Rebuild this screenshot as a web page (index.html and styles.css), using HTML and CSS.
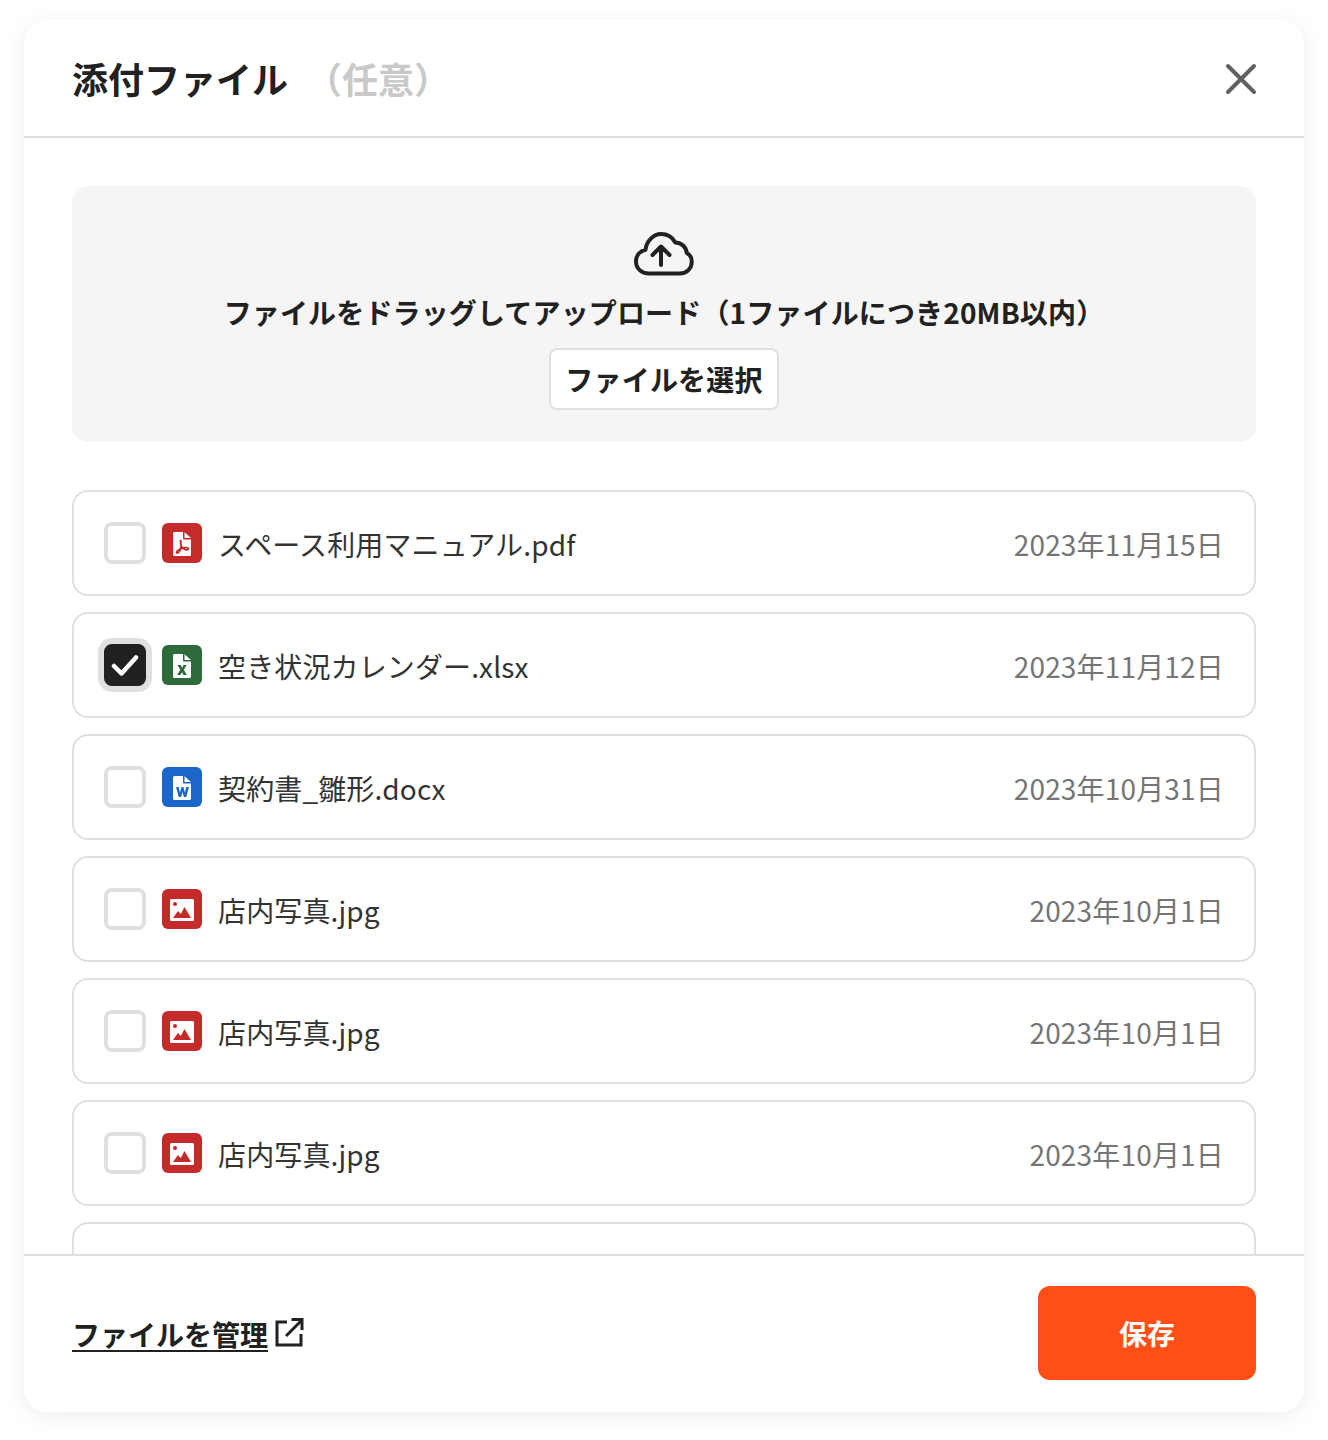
FILE: index.html
```html
<!DOCTYPE html>
<html lang="ja">
<head>
<meta charset="utf-8">
<title>添付ファイル</title>
<link rel="stylesheet" href="styles.css">
</head>
<body>
<svg class="defs" width="0" height="0" aria-hidden="true">
  <defs>
    <symbol id="doc" viewBox="0 0 40 40"><path fill="#fff" d="M12.500 9H21v6.500a1 1 0 0 0 1 1h7v15a1.500 1.500 0 0 1-1.500 1.500h-15a1.500 1.500 0 0 1-1.500-1.500v-21A1.500 1.500 0 0 1 12.500 9Z"/><path fill="#fff" d="M22.500 9.200L29 15h-6.500V9.200Z"/></symbol>
    <symbol id="pic" viewBox="0 0 40 40"><rect width="40" height="40" rx="6" fill="#c62b2b"/><rect x="8" y="10" width="24" height="22" rx="1.500" fill="#fff"/><circle cx="13" cy="15" r="2" fill="#c62b2b"/><path d="M11 29l5-7 2.800 3 3.700-7L29 29H11Z" fill="#c62b2b"/></symbol>
  </defs>
</svg>
<main class="dialog">
  <header class="head">
    <h1 class="title">添付ファイル<span class="optional">（任意）</span></h1>
    <svg class="close" viewBox="0 0 32 32"><path d="M3 3l26 26M29 3L3 29"/></svg>
  </header>
  <div class="content">
    <section class="drop">
      <svg class="cloud" viewBox="0 0 60 44"><path d="M15 41.500C7.500 41.500 2 36.500 2 29.500c0-6 4-10.500 9.500-11.800C12.500 9 19.500 2 27 2c6.500 0 11.500 3.300 14.300 8.500 6.500.3 11 4.700 11.500 10.500 3.300 1.700 5 5 5 8.500 0 7-5 12-12 12H15Z"/><path d="M27 33V16M18.500 23L27 14.500 35.500 23"/></svg>
      <p class="drop-text">ファイルをドラッグしてアップロード（1ファイルにつき20MB以内）</p>
      <button class="pick">ファイルを選択</button>
    </section>
    <ul class="files">
      <li class="file">
        <span class="check"></span>
        <svg class="ficon" viewBox="0 0 40 40"><rect width="40" height="40" rx="6" fill="#c62b2b"/><use href="#doc"/><path d="M18.800 18c-.6 3 .8 6.500 3.700 8.300 1.700 1 3.800.7 3.800-.6 0-1.400-3-1.500-5.800-.6-2.500.9-6 2.800-6 4.200 0 1.300 2.300 1 3.500-1.800 1.100-2.800 1.300-7.200.8-9.500-.1-.4-.3-.4-.4 0Z" fill="none" stroke="#c62b2b" stroke-width="1.700"/></svg>
        <span class="name">スペース利用マニュアル.pdf</span>
        <span class="date">2023年11月15日</span>
      </li>
      <li class="file">
        <span class="check on"><svg viewBox="0 0 28 24"><path d="M3 13l7.500 7.500L25 4.500"/></svg></span>
        <svg class="ficon" viewBox="0 0 40 40"><rect width="40" height="40" rx="6" fill="#2f6a3a"/><use href="#doc"/><path d="M15.500 20h3.300l1.300 2.700 1.400-2.700h3.200l-2.900 4.800 3.100 5.200h-3.400l-1.500-2.800-1.500 2.800h-3.300l3.100-5.200-2.800-4.800Z" fill="#2f6a3a"/></svg>
        <span class="name">空き状況カレンダー.xlsx</span>
        <span class="date">2023年11月12日</span>
      </li>
      <li class="file">
        <span class="check"></span>
        <svg class="ficon" viewBox="0 0 40 40"><rect width="40" height="40" rx="6" fill="#1b66c9"/><use href="#doc"/><path d="M14 20h2.700l1.300 5.700 1.500-5.700h1.900l1.500 5.700 1.300-5.700H27l-2.800 10h-2.300L20.500 24.700 19.100 30h-2.300L14 20Z" fill="#1b66c9"/></svg>
        <span class="name">契約書_雛形.docx</span>
        <span class="date">2023年10月31日</span>
      </li>
      <li class="file">
        <span class="check"></span>
        <svg class="ficon" viewBox="0 0 40 40"><use href="#pic"/></svg>
        <span class="name">店内写真.jpg</span>
        <span class="date">2023年10月1日</span>
      </li>
      <li class="file">
        <span class="check"></span>
        <svg class="ficon" viewBox="0 0 40 40"><use href="#pic"/></svg>
        <span class="name">店内写真.jpg</span>
        <span class="date">2023年10月1日</span>
      </li>
      <li class="file">
        <span class="check"></span>
        <svg class="ficon" viewBox="0 0 40 40"><use href="#pic"/></svg>
        <span class="name">店内写真.jpg</span>
        <span class="date">2023年10月1日</span>
      </li>
      <li class="file"></li>
    </ul>
  </div>
  <footer class="foot">
    <a class="manage" href="#"><span class="manage-text">ファイルを管理</span><svg viewBox="0 0 30 30"><path d="M13 5H3v23h24V17M12 19L27 4M17.500 2.500H28V13"/></svg></a>
    <button class="save">保存</button>
  </footer>
</main>
</body>
</html>
```
FILE: styles.css
```css
* { box-sizing: border-box; }
html, body { margin: 0; padding: 0; }
body {
  width: 1328px;
  height: 1440px;
  background: #fff;
  padding: 20px 24px 28px;
  font-family: "Noto Sans CJK JP", "Noto Sans", sans-serif;
  color: #212121;
}
.defs { position: absolute; }
.dialog {
  width: 1280px;
  height: 1392px;
  background: #fff;
  border-radius: 24px;
  box-shadow: 0 4px 24px rgba(0, 0, 0, .07);
  display: flex;
  flex-direction: column;
  overflow: hidden;
}
.head {
  flex: none;
  height: 118px;
  padding: 0 48px;
  border-bottom: 2px solid #e0e0e0;
  display: flex;
  align-items: center;
  justify-content: space-between;
}
.title { margin: 0; font-size: 36px; line-height: 1.5; font-weight: 700; }
.optional { margin-left: 18px; color: #c9c9c9; }
.close { width: 32px; height: 32px; fill: none; stroke: #616161; stroke-width: 4; stroke-linecap: round; margin: 2px -1px 0 0; }
.content { flex: 1; min-height: 0; padding: 48px 48px 0; overflow: hidden; }
.drop {
  height: 256px;
  background: #f5f5f5;
  border-radius: 16px;
  padding-top: 46px;
  display: flex;
  flex-direction: column;
  align-items: center;
}
.cloud { width: 60px; height: 44px; fill: none; stroke: #212121; stroke-width: 4; stroke-linecap: round; stroke-linejoin: round; }
.drop-text { margin: 15px 0 0; font-size: 28px; line-height: 42px; font-weight: 700; letter-spacing: .15px; }
.pick {
  margin-top: 15px;
  width: 230px;
  height: 62px;
  border: 2px solid #e0e0e0;
  border-radius: 8px;
  background: #fff;
  font: 700 28px/1.5 "Noto Sans CJK JP", sans-serif;
  letter-spacing: .2px;
  color: #212121;
  padding: 0;
}
.files { list-style: none; margin: 48px 0 0; padding: 0; display: flex; flex-direction: column; gap: 16px; }
.file {
  flex: none;
  height: 106px;
  border: 2px solid #e0e0e0;
  border-radius: 16px;
  padding: 0 30px 0 30px;
  display: flex;
  align-items: center;
}
.check {
  flex: none;
  width: 42px;
  height: 42px;
  border: 4px solid #e0e0e0;
  border-radius: 8px;
  background: #fff;
}
.check.on {
  background: #212121;
  border-color: #212121;
  box-shadow: 0 0 0 6px #e0e0e0;
  display: flex;
  align-items: center;
  justify-content: center;
}
.check.on svg { width: 28px; height: 24px; fill: none; stroke: #fff; stroke-width: 4.500; stroke-linecap: round; stroke-linejoin: round; }
.ficon { flex: none; width: 40px; height: 40px; margin: 0 16px; }
.name { flex: 1; font-size: 28px; line-height: 42px; color: #333; margin-top: 2px; letter-spacing: .13px; }
.date { font-size: 28px; line-height: 42px; color: #757575; margin-top: 2px; letter-spacing: .18px; }
.foot {
  flex: none;
  height: 158px;
  border-top: 2px solid #e0e0e0;
  padding: 30px 48px 32px;
  display: flex;
  align-items: center;
  justify-content: space-between;
  background: #fff;
}
.manage { display: flex; align-items: center; gap: 6px; padding-top: 2px; color: #212121; text-decoration: none; font-size: 28px; font-weight: 700; line-height: 42px; }
.manage-text { text-decoration: underline; text-underline-offset: 4px; text-decoration-thickness: 2px; }
.manage svg { width: 30px; height: 30px; fill: none; stroke: #212121; stroke-width: 3; margin-top: -4px; }
.save {
  width: 218px;
  height: 94px;
  border: 0;
  border-radius: 12px;
  background: #ff4f17;
  color: #fff;
  font: 700 28px/1.5 "Noto Sans CJK JP", sans-serif;
  padding: 0;
}
```
